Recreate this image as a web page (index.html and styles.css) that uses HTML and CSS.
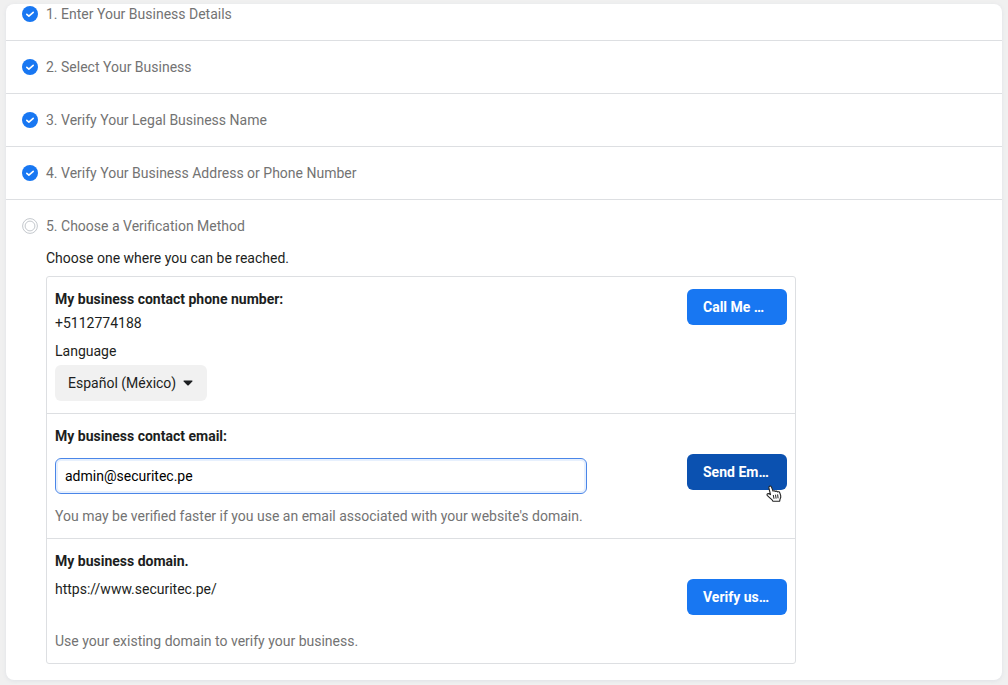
FILE: index.html
```html
<!DOCTYPE html>
<html lang="en">
<head>
<meta charset="utf-8">
<meta name="viewport" content="width=device-width, initial-scale=1">
<title>Business Verification</title>
<link rel="stylesheet" href="styles.css">
</head>
<body>
<svg class="symbols" aria-hidden="true">
  <symbol id="done" viewBox="0 0 16 16">
    <circle cx="8" cy="8" r="8" fill="#1877f2"/>
    <path d="M4.8 8.3l2.1 1.9 4.3-3.9" fill="none" stroke="#fff" stroke-width="1.6" stroke-linecap="round" stroke-linejoin="round"/>
  </symbol>
</svg>
<main class="card">
  <section class="step"><svg class="icon" aria-hidden="true"><use href="#done"/></svg><h2 class="title">1. Enter Your Business Details</h2></section>
  <section class="step"><svg class="icon" aria-hidden="true"><use href="#done"/></svg><h2 class="title">2. Select Your Business</h2></section>
  <section class="step"><svg class="icon" aria-hidden="true"><use href="#done"/></svg><h2 class="title">3. Verify Your Legal Business Name</h2></section>
  <section class="step"><svg class="icon" aria-hidden="true"><use href="#done"/></svg><h2 class="title">4. Verify Your Business Address or Phone Number</h2></section>
  <section class="step">
    <svg class="icon" viewBox="0 0 16 16" aria-hidden="true">
      <circle cx="8" cy="8" r="7.4" fill="none" stroke="#c4c8cd"/>
      <circle cx="8" cy="8" r="4.9" fill="none" stroke="#c4c8cd"/>
    </svg>
    <div class="body">
      <h2 class="title">5. Choose a Verification Method</h2>
      <p class="intro">Choose one where you can be reached.</p>
      <div class="methods">
        <section class="method">
          <div class="details">
            <h3 class="heading">My business contact phone number:</h3>
            <p class="phone">+5112774188</p>
            <label class="label" for="language">Language</label>
            <div class="picker">
              <select class="select" id="language"><option>Español (México)</option></select>
              <svg class="caret" viewBox="0 0 10 6" aria-hidden="true"><path d="M1 .5h8q.9.2.3 1L5.7 5.3q-.7.6-1.4 0L.7 1.5Q.1.7 1 .5z" fill="#1c1e21"/></svg>
            </div>
          </div>
          <button class="button" type="button">Call Me …</button>
        </section>
        <section class="method">
          <div class="details">
            <h3 class="heading"><label for="email">My business contact email:</label></h3>
            <input class="input" id="email" type="email" value="admin@securitec.pe">
            <p class="hint">You may be verified faster if you use an email associated with your website's domain.</p>
          </div>
          <button class="button lowered hovered" type="button">Send Em…
            <svg class="pointer" viewBox="0 0 16 18" aria-hidden="true">
              <path d="M3.6 1.2c.9-.4 1.6 0 1.9.9l1.5 4c.6-.6 1.8-.5 2.2.4.6-.7 1.9-.5 2.2.4 1-.5 2.1 0 2.4 1l.9 2.8c.4 1.6-.1 2.6-.7 3.6l-.3 1.9H6.8c-.4-1.3-1.6-2-2.7-3.1L1.4 10.7c-.6-.8-.5-1.7.2-2 1-.4 2 .2 2.9.9L2.9 3c-.2-.7 0-1.5.7-1.8z" fill="#fff" stroke="#222" stroke-width="1.1" stroke-linejoin="round"/>
              <path d="M7.3 10l.7 3.8M9.5 9.7l.6 3.9M11.6 9.4l.5 3.9" fill="none" stroke="#222" stroke-width="1"/>
            </svg>
          </button>
        </section>
        <section class="method">
          <div class="details">
            <h3 class="heading">My business domain.</h3>
            <p class="domain">https://www.securitec.pe/</p>
            <p class="hint spaced">Use your existing domain to verify your business.</p>
          </div>
          <button class="button lowered" type="button">Verify us…</button>
        </section>
      </div>
    </div>
  </section>
</main>
</body>
</html>
```
FILE: styles.css
```css
* { box-sizing: border-box; }

body {
  margin: 0;
  padding: 4px 6px;
  background: #f0f0f0;
  color: #1c1e21;
  font: 14px/20px Roboto, "Liberation Sans", sans-serif;
}

h2, h3, p { margin: 0; font-size: 14px; }

.symbols { position: absolute; width: 0; height: 0; }

.card {
  background: #fff;
  border-radius: 8px;
  box-shadow: 0 1px 4px #dfe1e6;
}

.step {
  display: flex;
  gap: 8px;
  padding: 16px;
  border-top: 1px solid #dddfe2;
}

.step:first-child { padding-top: 0; border-top: 0; }

.icon { flex: none; width: 16px; height: 16px; margin: 2px 0; }

.title { color: #737373; font-weight: 400; }

.body { flex: 1; min-width: 0; }

.intro { margin: 12px 0 8px; }

.methods {
  max-width: 750px;
  border: 1px solid #dddfe2;
  border-radius: 3px;
}

.method {
  display: flex;
  align-items: flex-start;
  gap: 100px;
  padding: 12px 8px;
}

.method + .method { border-top: 1px solid #dddfe2; }

.details { flex: 1; min-width: 0; }

.heading { font-weight: 700; }

.phone { margin: 4px 0 8px; }

.label { display: block; margin-bottom: 4px; }

.picker { position: relative; width: 152px; }

.select {
  display: block;
  width: 100%;
  height: 36px;
  padding: 0 28px 0 13px;
  border: 0;
  border-radius: 6px;
  appearance: none;
  background: #f1f1f1;
  color: inherit;
  font: inherit;
}

.caret {
  position: absolute;
  top: 15px;
  right: 14px;
  width: 10px;
  height: 6px;
  pointer-events: none;
}

.input {
  display: block;
  width: 100%;
  height: 36px;
  margin: 12px 0;
  padding: 0 9px;
  border: 1px solid #4a86e8;
  border-radius: 6px;
  outline: 0;
  box-shadow: inset 0 0 0 2px #e7f0fd;
  background: #fff;
  color: #000;
  font: inherit;
}

.hint { color: #737373; }

.domain { margin-top: 8px; }

.spaced { margin-top: 32px; }

.button {
  position: relative;
  flex: none;
  width: 100px;
  height: 36px;
  padding: 0 16px;
  border: 0;
  border-radius: 6px;
  background: #1877f2;
  color: #fff;
  font: inherit;
  font-weight: 700;
  text-align: left;
  white-space: nowrap;
}

.lowered { margin-top: 28px; }

.hovered { background: #0b51b0; }

.pointer {
  position: absolute;
  right: 5px;
  bottom: -13px;
  width: 16px;
  height: 18px;
}
```
